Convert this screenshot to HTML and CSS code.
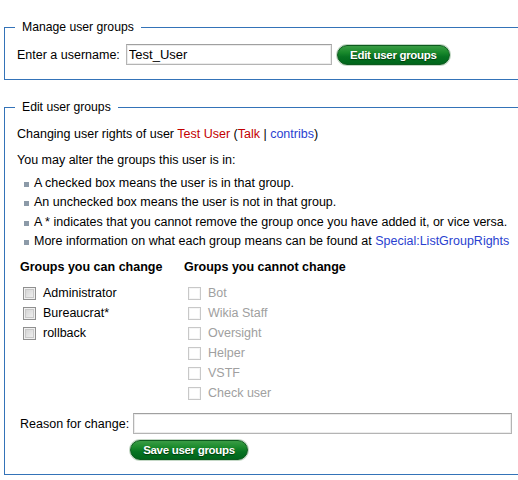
FILE: index.html
```html
<!DOCTYPE html>
<html>
<head>
<meta charset="utf-8">
<link rel="stylesheet" href="styles.css">
</head>
<body>
<fieldset class="box box-manage">
  <legend>Manage user groups</legend>
  <div class="user-row">
    <label class="user-label">Enter a username:</label>
    <input class="text-input user-input" type="text" value="Test_User">
    <button class="green-btn" type="button">Edit user groups</button>
  </div>
</fieldset>

<fieldset class="box box-edit">
  <legend>Edit user groups</legend>
  <p class="intro">Changing user rights of user <a class="red">Test User</a> (<a class="red">Talk</a> | <a class="blue">contribs</a>)</p>
  <p class="intro2">You may alter the groups this user is in:</p>
  <ul class="rules">
    <li>A checked box means the user is in that group.</li>
    <li>An unchecked box means the user is not in that group.</li>
    <li>A * indicates that you cannot remove the group once you have added it, or vice versa.</li>
    <li>More information on what each group means can be found at <a class="blue">Special:ListGroupRights</a></li>
  </ul>
  <div class="groups">
    <div class="col col-can">
      <div class="col-head">Groups you can change</div>
      <div class="cb-row"><span class="cb"></span><span>Administrator</span></div>
      <div class="cb-row"><span class="cb"></span><span>Bureaucrat*</span></div>
      <div class="cb-row"><span class="cb"></span><span>rollback</span></div>
    </div>
    <div class="col col-cannot">
      <div class="col-head">Groups you cannot change</div>
      <div class="cb-row off"><span class="cb"></span><span>Bot</span></div>
      <div class="cb-row off"><span class="cb"></span><span>Wikia Staff</span></div>
      <div class="cb-row off"><span class="cb"></span><span>Oversight</span></div>
      <div class="cb-row off"><span class="cb"></span><span>Helper</span></div>
      <div class="cb-row off"><span class="cb"></span><span>VSTF</span></div>
      <div class="cb-row off"><span class="cb"></span><span>Check user</span></div>
    </div>
  </div>
  <div class="reason">
    <label class="reason-label">Reason for change:</label>
    <input class="text-input reason-input" type="text">
    <span></span>
    <div><button class="green-btn save-btn" type="button">Save user groups</button></div>
  </div>
</fieldset>
</body>
</html>
```

FILE: styles.css
```css
html, body {
  margin: 0;
  padding: 0;
  background: #ffffff;
}
body {
  font-family: "Liberation Sans", Arial, sans-serif;
  font-size: 12.5px;
  color: #000;
  width: 518px;
}
.box {
  box-sizing: border-box;
  border: 1px solid #3473b8;
  border-right: 0;
  margin: 0 0 0 4px;
  padding: 0 0 0 12px;
  width: 514px;
  min-width: 0;
}
.box legend {
  font-size: 12.2px;
  line-height: 16px;
  padding: 0 7px;
  margin-left: -2px;
}
.box-manage {
  margin-top: 19px;
  padding-top: 9px;
  padding-bottom: 14px;
}
.box-edit {
  margin-top: 19px;
  padding-top: 10px;
  padding-bottom: 14px;
}
.user-row {
  display: flex;
  align-items: center;
  height: 21px;
}
.user-label {
  margin-right: 6px;
}
.text-input {
  box-sizing: border-box;
  border: 1px solid #b4b4b4;
  border-top-color: #a0a0a0;
  box-shadow: inset 0 0 0 1px #ececec;
  font-family: "Liberation Sans", Arial, sans-serif;
  font-size: 13px;
  padding: 0 2px;
  margin: 0;
  outline: none;
  background: #fff;
  color: #000;
}
.user-input {
  width: 206px;
  height: 21px;
}
.green-btn {
  box-sizing: border-box;
  height: 20px;
  padding: 0 11px;
  margin: 0 0 0 5px;
  border: 1px solid #0d5a1e;
  border-radius: 10px;
  box-shadow: 0 0 0 1px #c4d8c6;
  background: linear-gradient(#3a9c45 0%, #1a8a2c 35%, #077322 60%, #00651b 100%);
  color: #fff;
  font-family: "Liberation Sans", Arial, sans-serif;
  font-weight: bold;
  font-size: 11.5px;
  letter-spacing: -0.3px;
  line-height: 18px;
  text-shadow: 0 1px 1px #003a0a;
  cursor: pointer;
}
.user-row .green-btn {
  width: 113px;
}
.intro, .intro2 {
  margin: 0;
  line-height: 19px;
}
.intro2 {
  margin-top: 7px;
}
.red {
  color: #c30000;
}
.blue {
  color: #2a3fd0;
}
.rules {
  list-style: none;
  margin: 4px 0 0 0;
  padding: 0;
}
.rules li {
  position: relative;
  line-height: 19.3px;
  padding-left: 17px;
  white-space: nowrap;
}
.rules li::before {
  content: "";
  position: absolute;
  left: 7px;
  top: 8px;
  width: 5px;
  height: 5px;
  background: #8c9aa8;
}
.groups {
  display: flex;
  margin-top: 7px;
  padding-left: 3px;
}
.col-can {
  width: 164px;
}
.col-head {
  font-weight: bold;
  line-height: 19px;
  margin-bottom: 6px;
}
.cb-row {
  display: flex;
  align-items: center;
  height: 20px;
  padding-left: 3px;
}
.cb {
  box-sizing: border-box;
  width: 13px;
  height: 13px;
  border: 1px solid #8f8f8f;
  background: linear-gradient(135deg, #cfcfcf, #f4f4f4);
  box-shadow: inset 0 0 0 1px #f0f0f0, inset 0 0 0 2px #c8c8c8;
  margin-right: 7px;
}
.cb-row.off {
  color: #a0a0a0;
  padding-left: 4px;
}
.cb-row.off .cb {
  border-color: #c8c8c8;
  background: #fff;
  box-shadow: inset 0 0 0 1px #f6f6f6;
}
.reason {
  display: grid;
  grid-template-columns: 113px 379px;
  row-gap: 6px;
  margin-top: 10px;
  padding-left: 3px;
  align-items: center;
}
.reason-input {
  height: 21px;
  width: 379px;
}
.save-btn {
  margin-left: -3px;
  width: 118px;
}
```
